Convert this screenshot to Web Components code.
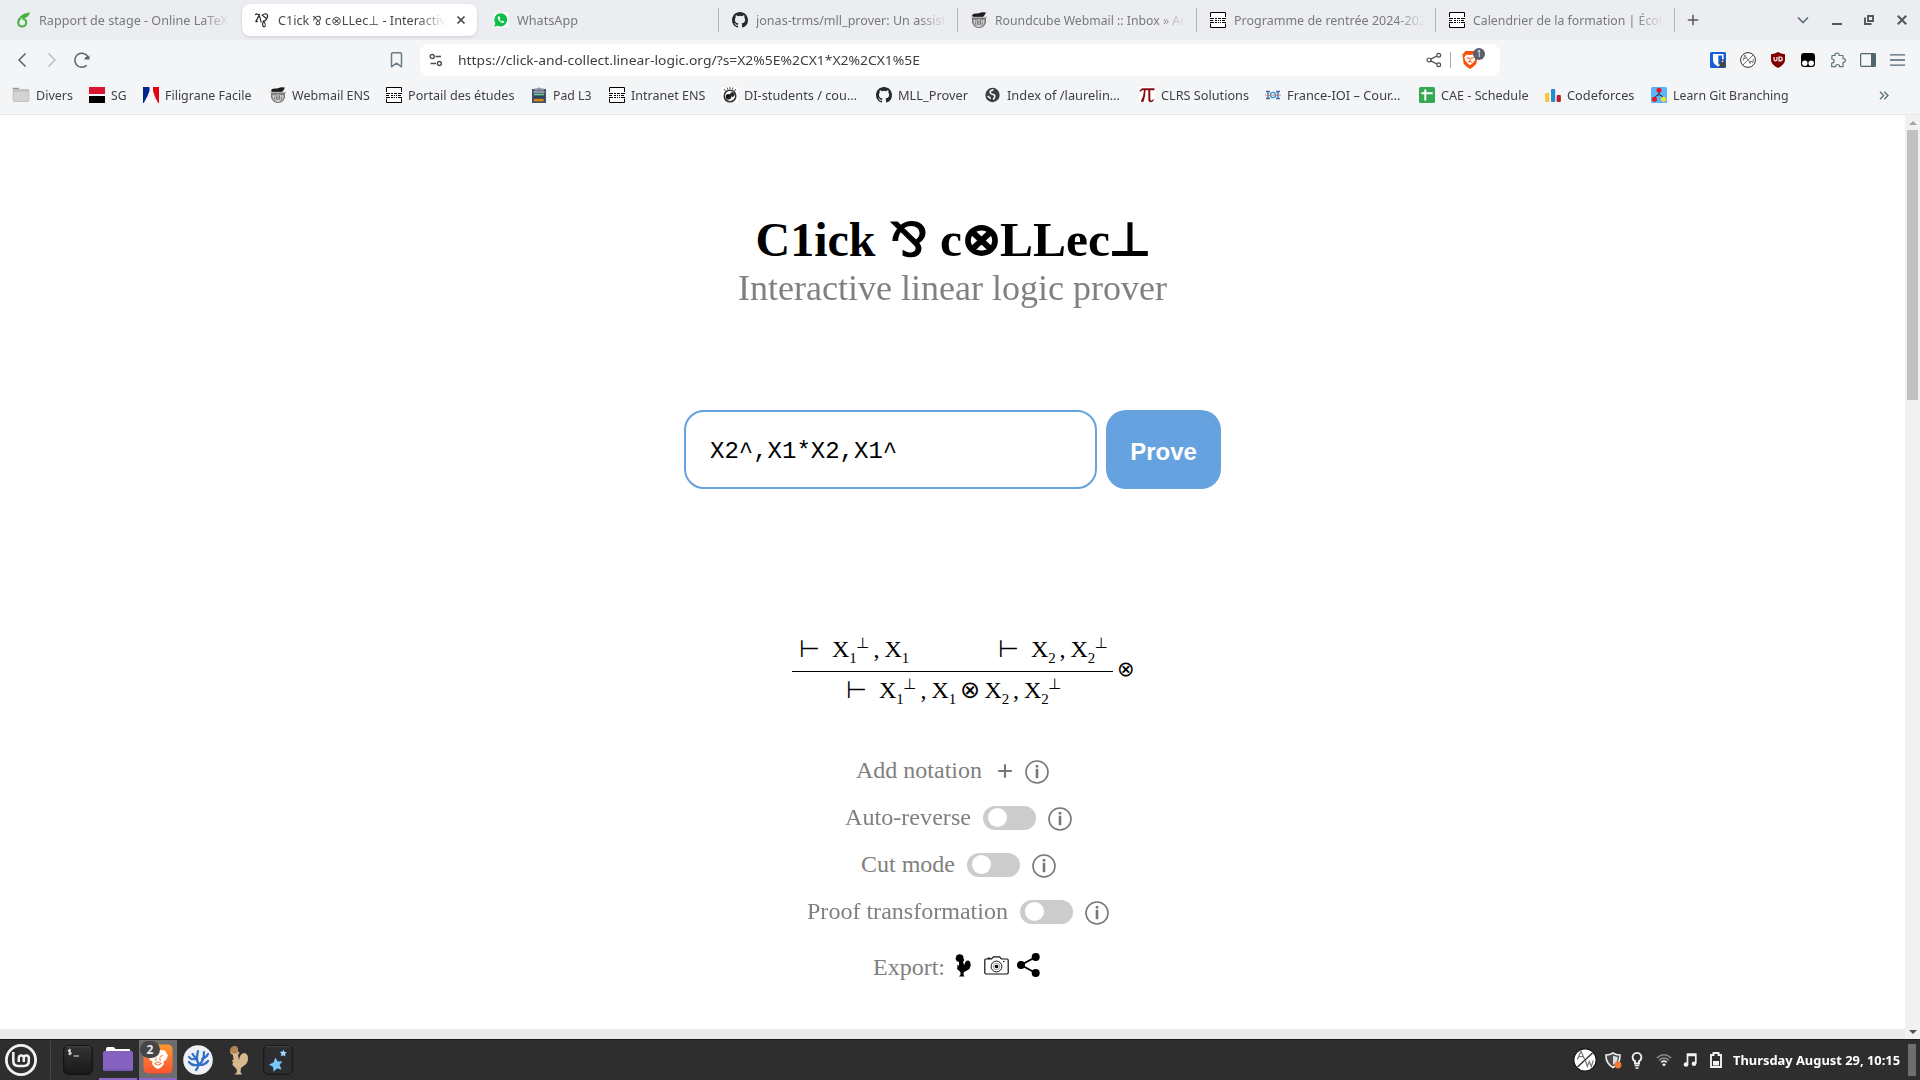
<!DOCTYPE html>
<html lang="en">
<head>
<meta charset="utf-8">
<title>C1ick ⅋ c⊗LLec⊥ - Interactive linear logic prover</title>
<style>
html,body{margin:0;padding:0;width:1920px;height:1080px;overflow:hidden;background:#fff}
</style>
</head>
<body>
<desktop-screen></desktop-screen>
<script>
const ICONS = {
overleaf:['0 0 16 16','<path d="M6.200 5.600C4.200 6.600 3.200 8.600 3.200 10.600a4 4 0 1 0 8 0c0-2.400-1.800-3.800-4-3.800M5.200 6.200C6.500 3.400 9 2.800 13.400 1.800 12.400 4.400 10 5 7.500 5.400" fill="none" stroke="#47b13c" stroke-width="2"/>'],
par:['0 0 16 16','<path d="M1.200 2.800q2-1.800 3.600.2 1.600 2.600 2.400 7.500M5.600 2 Q3.500 7 1.800 9.400 M1.400 9.400q1.400.8 2.400-.4M8.600 4.200q.8-2.600 3-2.400 2.400.4 2 3-.6 2.800-4.400 5.200Q8 12 9 14.200q1.400 1.200 2.200-.2Q11.800 11.400 9 8.600M7.500 2.600L12.500 6.500" fill="none" stroke="#222" stroke-width="1.150"/>'],
whatsapp:['0 0 16 16','<rect x=".5" y=".5" width="15" height="15" fill="#fff" opacity=".7"/><path d="M8 1.200a6.600 6.600 0 0 0-5.700 10L1.300 14.800l3.600-1A6.600 6.600 0 1 0 8 1.200z" fill="#0cbf45"/><path d="M5.500 4.200c-1.400.8-.9 3 .8 4.900 1.800 1.900 4 2.700 5 1.200l-.1-.9-1.500-.8-.9.9c-1-.4-1.800-1.200-2.300-2.300l.8-.9-.7-1.800z" fill="#fff"/>'],
github:['0 0 16 16','<path fill="#24292e" d="M8 0C3.580 0 0 3.580 0 8c0 3.540 2.290 6.530 5.470 7.590.4.070.55-.17.55-.38v-1.490c-2.230.48-2.690-.94-2.690-.94-.36-.92-.89-1.170-.89-1.170-.73-.5.060-.49.060-.49.8.060 1.230.83 1.230.83.71 1.220 1.870.87 2.330.66.070-.52.28-.87.51-1.070-1.780-.2-3.640-.89-3.640-3.950 0-.87.310-1.590.82-2.150-.08-.2-.36-1.020.08-2.120 0 0 .67-.21 2.200.82a7.600 7.600 0 0 1 4 0c1.530-1.040 2.200-.82 2.200-.82.44 1.100.16 1.920.08 2.120.51.56.82 1.270.82 2.150 0 3.070-1.870 3.750-3.650 3.950.29.250.54.730.54 1.480v2.190c0 .21.15.46.55.38A8 8 0 0 0 16 8c0-4.420-3.580-8-8-8z"/>'],
roundcube:['0 0 16 16','<path d="M1 3.500C2 1 5 1.800 7 1.500L11 .3l4 .1-1.500 2.800L12 5H2z" fill="#1d1d1d"/><path d="M1 6h14v4.500Q13 16 8 16T1 10.500z" fill="#777"/><path d="M0 5.300h16M2 8h12M2 9.500h3M11 9.500h3" stroke="#a5a5a5" stroke-width="1"/><path d="M5.300 8v3.200a2.700 2.300 0 0 0 5.400 0V8M3.300 8v4q1.500 2.500 4.700 2.500t4.700-2.500V8M8 7v5" stroke="#e6e6e6" fill="none" stroke-width=".9"/>'],
ens:['0 0 16 16','<path d="M0 0h16v16H0z" fill="#fff"/><path d="M.5 5V.5h15V5M.5 11.500v4h15v-4" fill="none" stroke="#000"/><g shape-rendering="crispEdges" stroke="#000"><path d="M0 6.500h4M5 6.500h2M8 6.500h3M12 6.500h4M0 8.500h3M5 8.500h2M8 8.500h1M10 8.500h1M12 8.500h3M0 10.500h4M5 10.500h2M8 10.500h1M10 10.500h1M12 10.500h4"/></g>'],
close:['0 0 10 10','<path d="M1.500 1.500l7 7M8.500 1.500l-7 7" stroke="currentColor" stroke-width="1.700"/>'],
plus:['0 0 12 12','<path d="M6 .8v10.400M.8 6h10.400" stroke="#55585c" stroke-width="1.500"/>'],
chevdown:['0 0 12 8','<path d="M1 1.500l5 5 5-5" fill="none" stroke="#5d727b" stroke-width="1.700"/>'],
mini:['0 0 10 12','<path d="M0 10h10" stroke="#54565a" stroke-width="2"/>'],
restore:['0 0 10 10','<path d="M4 1h5v5H4zM1 2.500V9h6.500" fill="none" stroke="#54565a" stroke-width="1.900"/>'],
back:['0 0 10 16','<path d="M8.500 1.500L2 8l6.500 6.500" fill="none" stroke="#52666f" stroke-width="1.500"/>'],
fwd:['0 0 10 16','<path d="M1.500 1.500L8 8l-6.500 6.500" fill="none" stroke="#b3bec3" stroke-width="1.400"/>'],
reload:['0 0 16 16','<path d="M12.800 13.200A7 7 0 1 1 14 4.800" fill="none" stroke="#52666f" stroke-width="1.500"/><path d="M10.300 7.600h5.200V3q-1 2.200-2.200 1.300-2.900.8-3 3.300z" fill="#52666f"/>'],
bookmark:['0 0 12 16','<path d="M1 2.200Q1 .8 2.400.8h7.200Q11 .8 11 2.200v12.600l-5-3.600-5 3.600z" fill="none" stroke="#6a7d86" stroke-width="1.500" stroke-linejoin="round"/>'],
tune:['0 0 14 14','<g fill="none" stroke="#4a4d51" stroke-width="1.400"><circle cx="3.200" cy="3.500" r="2"/><path d="M6.500 3.500H12M1.500 10.500H7"/><circle cx="10.400" cy="10.500" r="2"/></g>'],
share:['0 0 16 16','<g fill="none" stroke="#4a4d51" stroke-width="1.200"><circle cx="3" cy="8" r="2"/><circle cx="12.700" cy="3.200" r="1.900"/><circle cx="12.700" cy="12.800" r="1.900"/><path d="M4.800 7.100L11 4M4.800 8.900L11 12"/></g>'],
brave:['0 0 16 18','<path d="M3.500 0h9l3 3.500-1 8.500q-.6 2-6.500 6-5.900-4-6.500-6L.5 3.500z" fill="#fb5009"/><path d="M4.500 3.500l3.500.6 3.500-.6 2.200 2.700-1 3.500L10 12.800 8 14.300l-2-1.500-2.700-3.100-1-3.500z" fill="#fff"/><path d="M4.500 6.700l2.500.6M11.500 6.700l-2.500.6M8 6.500v3.700M6 11.400l2-1 2 1" stroke="#fb5009" stroke-width="1" fill="none"/>'],
bitw:['0 0 16 16','<rect width="16" height="16" rx="1.500" fill="#175ddc"/><path d="M3 2h10.500v6q0 4-5.200 6.500Q3 12 3 8z" fill="#fff"/><path d="M8.300 3.500h3.700V8q0 2.500-3.700 4.700z" fill="#175ddc"/><path d="M9.500 10h6v5.500h-6z" fill="#444"/><path d="M10.800 10.500V8.800q1.700-2 3.400 0v1.700" fill="none" stroke="#444" stroke-width="1.200"/>'],
aw:['0 0 16 16','<circle cx="8" cy="8" r="7.400" fill="#fff" stroke="#333" stroke-width="1"/><path d="M3 12.800L13 3.200M3.200 8.600L4.800 3l3 4.600M4 6.600l2.700-.6M8.500 7.500l1.600 4 .9-2.600 1.800 2 .5-4" fill="none" stroke="#666" stroke-width=".9"/>'],
ublock:['0 0 14 16','<path d="M7 0q3 2 7 2.200V8q0 4.500-7 8-7-3.500-7-8V2.200Q4 2 7 0z" fill="#800000"/><path d="M3 5v2.300q0 1.500 1.500 1.500T6 7.300V5M8 5v3.800h1.300q1.900 0 1.900-1.900T9.300 5z" fill="none" stroke="#fff" stroke-width="1.200"/>'],
tamper:['0 0 16 16','<rect x="1" y="1" width="14" height="14" rx="3" fill="#000"/><circle cx="4.800" cy="11.300" r="2.700" fill="#fff"/><circle cx="11.200" cy="11.300" r="2.700" fill="#fff"/>'],
puzzle:['0 0 16 16','<path d="M2 3.500h3.200Q4.600 1 7 1t2 2.500H13v3.200Q15.500 6.500 15.500 8.500T13 10.700v4H9.500Q9.600 12.500 7.500 12.500T5.500 14.700H1.700V11Q4 11 4 9T1.800 7z" fill="none" stroke="#5d727b" stroke-width="1.200" stroke-linejoin="round"/>'],
side:['0 0 16 14','<rect x=".6" y=".6" width="14.800" height="12.800" rx="1" fill="none" stroke="#52666f" stroke-width="1.200"/><path d="M11 .6h4.500v13H11z" fill="#52666f"/>'],
menu:['0 0 15 12','<path d="M0 .8h15M0 6h15M0 11.200h15" stroke="#52666f" stroke-width="1.300"/>'],
more:['0 0 10 9','<path d="M1 .7l3.700 3.800L1 8.300M5.300.7L9 4.500 5.300 8.300" fill="none" stroke="#5d727b" stroke-width="1.400"/>'],
folder:['0 0 18 16','<path d="M1 2q0-1 1-1h4q1 0 1.500 1H16q1 0 1 1v10q0 1.500-1.500 1.500H2.500Q1 14.500 1 13z" fill="#c4c4c4"/><path d="M1 4h16v9q0 1.500-1.500 1.500H2.500Q1 14.500 1 13z" fill="#d3d3d3" stroke="#aaa" stroke-width=".5"/><path d="M.5 1.300h6.500" stroke="#8a8a8a" stroke-width="1"/>'],
sg:['0 0 16 16','<path d="M0 0h16v7H0z" fill="#dc1532"/><path d="M0 7h16v2H0z" fill="#fff"/><path d="M0 9h16v7H0z" fill="#000"/>'],
fili:['0 0 16 16','<path d="M0 0h16v16H0z" fill="#f8f8fa"/><path d="M0 0h6.500v4L4 10 .8 16H0z" fill="#00268c"/><path d="M10 0H16v16h-.8L12 10 10 4z" fill="#e20613"/>'],
pad:['0 0 14 16','<path d="M0 2h14v14H0z" fill="#42506a"/><path d="M2 3.500h10V1.500H9.500Q7-.5 4.500 1.500H2z" fill="#8d99a6"/><path d="M1.500 5h11" stroke="#e0e3e6"/><path d="M2 7.500h10" stroke="#66d28c" stroke-width="1.500"/><path d="M1.500 10h11" stroke="#23304a"/><path d="M2 13.200h9.500" stroke="#e8890b" stroke-width="2.200"/>'],
di:['0 0 16 16','<path d="M0 0h16v16H0z" fill="#fff"/><circle cx="8" cy="9" r="5.800" fill="none" stroke="#333" stroke-width="1.500"/><circle cx="6.400" cy="9.800" r="2.700" fill="#111"/><circle cx="10.300" cy="7.600" r="2.300" fill="#222"/><path d="M2 2l1.500 2M5 .5l.8 2M8 0v2M11 .5l-.6 2M14 2l-1.500 2M3.500 13.500L13 5.500" stroke="#333" stroke-width=".9"/>'],
globe:['0 0 16 16','<circle cx="7.500" cy="8" r="7.200" fill="#3c4043"/><path d="M8.500 2.800Q5.500 3.200 5 5.200q.2 1.600 2.300 2.100 2.500.2 2.500 2-.2 1.800-1.800 3M2.500 9.200L4.800 10.500l.6 1.600" fill="none" stroke="#f4f5f7" stroke-width="1.500"/>'],
pi:['0 0 16 16','<path d="M0 0h16v16H0z" fill="#fff"/><path d="M.3 4.800Q1.500 1.300 4 1.300h11.500v2H11.300V12q.2 2 1.500 1.600 1-.3 1.200-1.600h.8q-.3 3.200-3 3.300-2.500 0-2.500-3.200V3.300H6.500Q6.500 10 4.600 14.500q-1.500 1.200-2.700-.3Q4.800 9 5 3.300H4Q2 3.300 1.200 4.800z" fill="#850d12"/>'],
ioi:['0 0 16 16','<path d="M1 4.500h4M3 4.500v7M1 11.500h4M11 4.500h4M13 4.500v7M11 11.500h4" stroke="#3a6cab" stroke-width="1.300"/><circle cx="8" cy="8" r="2.600" fill="none" stroke="#3a90c5" stroke-width="1.400"/><path d="M0 8.200h16" stroke="#b56a66" stroke-width=".7"/>'],
cae:['0 0 16 16','<rect width="16" height="16" rx="1.500" fill="#34a853"/><path d="M6.300 2.500v11M2.300 6.300h11.400" stroke="#fff" stroke-width="2"/>'],
cf:['0 0 16 16','<rect x="0" y="6" width="4.300" height="9" rx="1" fill="#f5c83c"/><rect x="6" y="2" width="4.200" height="13" rx="1" fill="#1f8dcf"/><rect x="11.600" y="8" width="4.300" height="7" rx="1" fill="#b8202b"/>'],
git:['0 0 16 16','<rect width="16" height="16" rx="1.500" fill="#58b7fa"/><path d="M8 4v3.500M3.500 12Q4 8.500 8 7.500q4 1 4.500 4.500" stroke="#222" fill="none"/><circle cx="8" cy="3.300" r="2.500" fill="#f3111a"/><circle cx="3.500" cy="12.300" r="2.500" fill="#f3111a"/><circle cx="12.500" cy="12.300" r="2.500" fill="#f5e620"/>'],
info:['0 0 24 24','<circle cx="12" cy="12" r="11" fill="none" stroke="#777" stroke-width="1.600"/><path d="M12 8.800V18.200" stroke="#777" stroke-width="2.600"/><path d="M12 5v2.500" stroke="#777" stroke-width="2.600"/>'],
add:['0 0 14 14','<path d="M7 .3v13.400M.2 7h13.600" stroke="#777" stroke-width="2.100"/>'],
rooster:['0 0 16 23','<path d="M1.500 1.500Q4-.8 7 .8q1.800 1.200 1.400 3.600L9.300 6 8 8l1.200 3.200q.8-4.700 4-4.700Q16 7.500 15.600 12q-.6 3.500-3.600 4.500L9 18l-.6 2.500 1 2H4l1.600-2-.2-2.500-3.300-3q-.4-1.500.6-2L2 11l2 .6V8Q1 7.500.6 4.500z" fill="#000"/>'],
camera:['0 0 25 19','<path d="M2 3h5.500l2-2.200h6L17.500 3H23q1.200 0 1.200 1.200v12.600q0 1.200-1.200 1.200H2q-1.200 0-1.200-1.200V4.200Q.8 3 2 3z" fill="none" stroke="#111" stroke-width="1.200"/><circle cx="12.500" cy="10.500" r="5.400" fill="none" stroke="#111"/><circle cx="12.500" cy="10.500" r="3.200" fill="none" stroke="#111" stroke-width=".4"/><circle cx="12.500" cy="10.500" r="1.800"/><path d="M3.500 2.300h3" stroke="#111" stroke-width="1.400"/><circle cx="19.800" cy="5.500" r=".8"/>'],
nodes:['0 0 23 24','<circle cx="4" cy="12" r="4"/><circle cx="18.700" cy="4" r="4"/><circle cx="18.700" cy="20" r="4"/><path d="M18.700 4L4 12l14.700 8" fill="none" stroke="#000" stroke-width="1.900"/>'],
mint:['0 0 32 32','<circle cx="16" cy="16" r="14.600" fill="none" stroke="#f2f2f2" stroke-width="2.800"/><path d="M8.300 8v9q0 5 5 5h5.500q5 0 5-5v-3q0-2.500-2.500-2.500t-2.500 2.500v4M18.800 14q0-2.500-2.500-2.500T13.800 14v4" fill="none" stroke="#f2f2f2" stroke-width="2.500"/>'],
term:['0 0 30 30','<defs><linearGradient id="g" x2="0" y2="1"><stop stop-color="#333"/><stop offset="1" stop-color="#191919"/></linearGradient></defs><rect x=".7" y=".7" width="28.600" height="28.600" rx="4.500" fill="url(#g)" stroke="#0e0e0e"/><path d="M2.500 1.700h25" stroke="#555" stroke-width=".7"/><path d="M8 5.200q-2.600-.7-2.600.7 0 .9 1.400 1.100 1.500.3 1.400 1.300-.3 1.200-2.900.5M6.800 3.800v6.400M10.500 11h5.500" stroke="#e6e6e6" stroke-width="1.100" fill="none"/>'],
files:['0 0 30 26','<path d="M3 3q0-2 2-2h5q1.500 0 2.500 2H27v6H3z" fill="#fff"/><rect y="5" width="30" height="20" rx="1.500" fill="#8562c0"/><path d="M.5 24h29" stroke="#6f4ea8"/>'],
lion:['0 0 30 30','<defs><linearGradient id="b" x2="0" y2="1"><stop stop-color="#fb9a33"/><stop offset="1" stop-color="#fb5330"/></linearGradient></defs><rect x=".5" y=".5" width="29" height="29" rx="5" fill="url(#b)"/><path d="M7 8l5-2 3 .8L18 6l4 .5 3 5-2 4.500-2.500 1.500.5 2.500-3 3.500-3 1.500-3-1.500L9 20l.5-2.500L7 16l-2-4.500z" fill="#fff"/><path d="M10 11.500l3 1M20 11.500l-3 1M13.300 13.500l-.6 3.500M16.700 13.500l.6 3.500M11.500 19.500L15 18l3.500 1.500-3.500 1.700z" stroke="#fb7030" stroke-width="1" fill="none"/>'],
coral:['0 0 30 30','<circle cx="15" cy="15" r="14.800" fill="#eef0f4"/><path d="M13 25q3-3 2-7.500Q13 13 9.500 9M15 18q-2-5 0-12M16 19q5-2 5-12M17 20q5 0 8-4M14 20q-5 1-8-3M12 14q-4 1-6-2M19 14q4-1 6-5" stroke="#2f6fc4" stroke-width="2.200" fill="none" stroke-linecap="round"/>'],
coq:['0 0 20 30','<path d="M2 3Q4 .5 7.500 1.500 9.500 3 9 6l1.500 2L9 10l1 5q1-7 5.500-7Q19.500 9 19 15q-1 4.500-4.500 6L12 23l-.5 4 1.500 2.500H5.500L8 27l-.5-3-4-4q-.5-2 .7-2.500L2.500 15l2 .3L4 10Q.5 8.500 1 6z" fill="#d7b98d"/><path d="M2 3Q4 .5 7.500 1.500 9.500 3 9 6L8 8.500H3.500Q.5 8 1 6z" fill="#b88354"/>'],
anki:['0 0 30 30','<rect x=".7" y=".7" width="28.600" height="28.600" rx="4.500" fill="#2b2d31" stroke="#141414"/><path d="M2.500 1.700h25" stroke="#555" stroke-width=".7"/><path d="M12.500 12.500l2.200 4 4.600-.2-2.700 3.800 2 4.400-4.600-1-3.500 3.300-.4-4.800-4.100-2.500 4.500-1.900z" fill="#78c8fb"/><path d="M20.500 4.500l.8 2.500 2.700.2-2 1.800.6 2.600-2.400-1.400-2.400 1.100.7-2.600-1.900-2 2.700 0z" fill="#a2dbff"/>'],
awtray:['0 0 24 24','<circle cx="12" cy="12" r="11.200" fill="#fff" stroke="#111" stroke-width="1.200"/><path d="M4.500 19L19.500 5" stroke="#222" stroke-width="1.200"/><path d="M4.300 11.500L8 3.200l3.600 8M5.400 8.700h5M12.500 12.500l1.800 6 2-5 2 5 2-6" fill="none" stroke="#777" stroke-width="1.200"/>'],
shield:['0 0 18 17','<path d="M8 1Q11 3 15 3q.5 8-7 12.500Q.5 11 1 3q4 0 7-2z" fill="#4a4a4a" stroke="#eee" stroke-width="1.600"/><path d="M8 3.500q2.500 1.300 4.800 1.400Q13 10 8 13z" fill="#ddd"/><circle cx="13" cy="13" r="3.400" fill="#f27835"/>'],
bulb:['0 0 12 18','<path d="M4 12.500V10.200A4.400 4.400 0 1 1 8 10.200v2.300z" fill="none" stroke="#f2f2f2" stroke-width="1.900"/><path d="M3.700 14.500h4.600M4.500 17h3" stroke="#f2f2f2" stroke-width="1.300"/>'],
wifi:['0 0 16 14','<path d="M.8 5Q8-1.500 15.200 5M3 7.300q5-4.300 10 0" fill="none" stroke="#888" stroke-width="1.600"/><path d="M5.200 9.300q2.800-2.300 5.600 0" fill="none" stroke="#eee" stroke-width="1.500"/><path d="M6 11.300q2-1.400 4 0L8 13.500z" fill="#fff"/>'],
note:['0 0 14 14','<path d="M4.500 11.500V1.200h8.300v9.300M4.500 2.300h8" stroke="#f2f2f2" stroke-width="1.700" fill="none"/><circle cx="3" cy="11.500" r="2.300" fill="#f2f2f2"/><circle cx="11" cy="10.700" r="2.300" fill="#f2f2f2"/>'],
batt:['0 0 12 16','<path d="M1 3h2.500V1h5v2H11v12H1z" fill="none" stroke="#f2f2f2" stroke-width="1.900"/><path d="M3 9h6v4.500H3z" fill="#f2f2f2"/>'],
up:['0 0 8 4','<path d="M0 4h8L4 0z" fill="#a3a3a3"/>'],
down:['0 0 8 4','<path d="M0 0h8L4 4z" fill="#505050"/>']
};
const def = (name, render, after) => customElements.define(name, class extends HTMLElement {
  connectedCallback(){
    if(this.shadowRoot) return;
    this.attachShadow({mode:'open'}).innerHTML = render(this);
    if(after) after(this);
  }
});
const a = (e,k,d='') => e.hasAttribute(k) ? e.getAttribute(k) : d;

/* Icon: n = name, w/h = size, l = left margin */
def('svg-icon', e => { const [vb,body]=ICONS[a(e,'n')]; const w=a(e,'w','16'),h=a(e,'h',w);
  return `<style>:host{display:block;flex:none;width:${w}px;height:${h}px;margin-left:${a(e,'l','0')}px}svg{display:block}</style><svg width="${w}" height="${h}" viewBox="${vb}">${body}</svg>`; });

/* Text run condensed or widened to a fixed advance */
def('fit-text', e => `<style>:host{display:block;flex:none;white-space:nowrap;width:${a(e,'w')}px;margin-left:${a(e,'l','0')}px}
span{display:inline-block;transform-origin:0 50%}</style><span><slot></slot></span>`,
  e => { const s=e.shadowRoot.querySelector('span'); const r=s.getBoundingClientRect().width; if(r) s.style.transform=`scaleX(${a(e,'w')/r})`; });

def('browser-tab', e => `<style>
:host{display:flex;align-items:center;box-sizing:border-box;width:239px;height:40px;flex:none;color:#77797e}
.t{flex:1;display:flex;align-items:center;height:32px;margin:0 2px 0 1px;padding-left:12px;border-radius:8px;min-width:0}
:host([active]) .t{background:#fff;color:#45474b;box-shadow:0 1px 3px #0002}
.c{width:${a(e,'cw','191')}px;overflow:hidden;flex:none;margin-left:8px;${e.hasAttribute('fade')?'-webkit-mask-image:linear-gradient(90deg,#000 calc(100% - 28px),transparent)':''}}
.s{width:1px;height:24px;background:${e.hasAttribute('sep')?'#b5b6b9':'transparent'}}
</style><div class="t"><svg-icon n="${a(e,'icon')}"></svg-icon><div class="c"><fit-text w="${a(e,'tw')}"><slot></slot></fit-text></div>${e.hasAttribute('active')?'<svg-icon n="close" w="10" l="10"></svg-icon>':''}</div><div class="s"></div>`);

def('tab-strip', () => `<style>:host{display:flex;align-items:center;height:40px;background:#ecedf1;padding-left:2px}</style>
<browser-tab icon="overleaf" tw="189" fade>Rapport de stage - Online LaTeX</browser-tab>
<browser-tab icon="par" tw="168" cw="168" fade active>C1ick ⅋ c⊗LLec⊥ - Interactiv</browser-tab>
<browser-tab icon="whatsapp" tw="61" sep>WhatsApp</browser-tab>
<browser-tab icon="github" tw="190" fade sep>jonas-trms/mll_prover: Un assist</browser-tab>
<browser-tab icon="roundcube" tw="191" fade sep>Roundcube Webmail :: Inbox » Ac</browser-tab>
<browser-tab icon="ens" tw="192" fade sep>Programme de rentrée 2024-202</browser-tab>
<browser-tab icon="ens" tw="189" fade sep>Calendrier de la formation | Écol</browser-tab>
<svg-icon n="plus" w="12" l="12"></svg-icon>
<svg-icon n="chevdown" w="12" h="8" l="98"></svg-icon>
<svg-icon n="mini" w="10" h="12" l="23"></svg-icon>
<svg-icon n="restore" w="10" l="22"></svg-icon>
<svg-icon n="close" w="12" l="22" style="color:#54565a"></svg-icon>`);

def('nav-toolbar', () => `<style>:host{display:flex;align-items:center;height:40px;padding-left:17px}
.url{display:flex;align-items:center;width:1080px;height:32px;margin-left:17px;border-radius:9px;background:#fff;color:#3b3d42;flex:none}
.sep{width:1px;height:16px;background:#aaa;margin-left:8px}
.br{position:relative;margin-left:11px}
.n{position:absolute;left:11px;top:-3px;width:12px;height:12px;border-radius:6px;background:#5a5e6f;color:#fff;font-size:8px;line-height:12px;text-align:center}
.sp{flex:1}</style>
<svg-icon n="back" w="10" h="16"></svg-icon><svg-icon n="fwd" w="10" h="16" l="20"></svg-icon><svg-icon n="reload" l="17"></svg-icon>
<svg-icon n="bookmark" w="13" h="16" l="300"></svg-icon>
<div class="url"><svg-icon n="tune" w="14" l="9"></svg-icon><fit-text w="462" l="15">https://click-and-collect.linear-logic.org/?s=X2%5E%2CX1*X2%2CX1%5E</fit-text><div class="sp"></div>
<svg-icon n="share"></svg-icon><div class="sep"></div><div class="br"><svg-icon n="brave" w="16" h="18"></svg-icon><div class="n">1</div></div><div style="width:22px"></div></div>
<svg-icon n="bitw" l="210"></svg-icon><svg-icon n="aw" l="14"></svg-icon><svg-icon n="ublock" w="14" h="16" l="15"></svg-icon><svg-icon n="tamper" l="15"></svg-icon><svg-icon n="puzzle" l="14"></svg-icon><svg-icon n="side" w="16" h="14" l="14"></svg-icon><svg-icon n="menu" w="15" h="12" l="14"></svg-icon>`);

def('bookmark-item', e => `<style>:host{display:flex;align-items:center;flex:none;width:${a(e,'w')}px}</style>
<svg-icon n="${a(e,'icon')}" w="${a(e,'iw','16')}" h="16"></svg-icon><fit-text l="${a(e,'g','6')}" w="${a(e,'tw')}"><slot></slot></fit-text>`);

def('bookmark-bar', () => `<style>:host{display:flex;align-items:center;padding:0 0 2px 12px;color:#3d3f43;border-bottom:1px solid #e6e7ea;box-sizing:border-box;margin-top:-2px;height:37px}</style>
<bookmark-item icon="folder" iw="18" w="77" tw="37">Divers</bookmark-item>
<bookmark-item icon="sg" w="54" tw="15.500">SG</bookmark-item>
<bookmark-item icon="fili" w="127" tw="86.500">Filigrane Facile</bookmark-item>
<bookmark-item icon="roundcube" w="116" tw="78">Webmail ENS</bookmark-item>
<bookmark-item icon="ens" w="146" tw="106.500">Portail des études</bookmark-item>
<bookmark-item icon="pad" iw="14" w="77" g="7" tw="38.500">Pad L3</bookmark-item>
<bookmark-item icon="ens" w="113" tw="74.500">Intranet ENS</bookmark-item>
<bookmark-item icon="di" w="154" tw="113">DI-students / cou…</bookmark-item>
<bookmark-item icon="github" w="109" tw="70">MLL_Prover</bookmark-item>
<bookmark-item icon="globe" w="154" tw="113">Index of /laurelin…</bookmark-item>
<bookmark-item icon="pi" w="126" tw="88">CLRS Solutions</bookmark-item>
<bookmark-item icon="ioi" w="154" tw="113.500">France-IOI – Cour…</bookmark-item>
<bookmark-item icon="cae" w="126" tw="87.500">CAE - Schedule</bookmark-item>
<bookmark-item icon="cf" w="106" tw="67.500">Codeforces</bookmark-item>
<bookmark-item icon="git" w="228" tw="115.500">Learn Git Branching</bookmark-item>
<svg-icon n="more" w="10" h="9"></svg-icon>`);

/* Sequent: tokens in a string, T turnstile, 1/2 atoms, ' dual, , comma, * tensor */
def('sequent-line', e => { const M={T:'<i style="width:33px" class="s">⊢</i>','1':'<i style="width:25.500px">X<sub>1</sub></i>','2':'<i style="width:25.500px">X<sub>2</sub></i>',"'":'<i style="width:13px"><sup>⊥</sup></i>',',':'<i style="width:14px"><b></b>,</i>','*':'<i style="width:27.500px" class="s t">⊗</i>'};
  return `<style>:host{display:flex;height:34px;line-height:34px;margin-left:${a(e,'l','0')}px;flex:none}
i{font-style:normal;flex:none;white-space:nowrap;height:34px;display:block}b{display:inline-block;width:3px}
.s{font-family:"DejaVu Sans","Liberation Serif",serif;font-size:24px}.t{text-indent:3px}
sub,sup{font-size:15px;line-height:0;position:relative;vertical-align:baseline}sub{top:6px}sup{top:-9px;left:-1.500px;font:15px "DejaVu Sans",sans-serif;line-height:0}</style>`+[...a(e,'f')].map(c=>M[c]).join(''); });

def('proof-tree', () => `<style>:host{display:flex;flex:none;align-items:center;width:342px;margin-left:792px;color:#000}
.p{width:321px;flex:none}.r{display:flex;width:321px}.up{height:39px;border-bottom:1px solid #000}.lo{padding-top:1px}
.rule{font:21px/20px "DejaVu Sans",sans-serif;margin:-1px 0 0 4px}</style>
<div class="p"><div class="r up"><sequent-line f="T1',1" l="7"></sequent-line><div style="flex:1"></div><sequent-line f="T2,2'" style="margin-right:4px"></sequent-line></div>
<div class="r lo"><sequent-line f="T1',1*2,2'" l="54"></sequent-line></div></div><div class="rule">⊗</div>`);

def('toggle-switch', () => `<style>:host{display:flex;align-items:center;width:53px;height:24px;border-radius:12px;background:#ccc;flex:none;box-sizing:border-box;padding-left:5px}div{width:19px;height:19px;border-radius:50%;background:#fff}</style><div></div>`);

def('option-row', e => `<style>:host{display:flex;align-items:center;height:47px;padding-left:${a(e,'x')}px;color:#808080}
toggle-switch{margin-left:12px}.i{padding-top:2px}</style><fit-text w="${a(e,'tw')}"><slot></slot></fit-text>${e.hasAttribute('plus')?'<svg-icon n="add" w="14" l="16"></svg-icon>':'<toggle-switch></toggle-switch>'}<div class="i"><svg-icon n="info" w="24" l="${e.hasAttribute('plus')?13:12}"></svg-icon></div>`);

def('prover-page', () => `<style>
:host{display:block;height:914px;width:1905px;background:#fff;font:24px "Liberation Serif",serif;overflow:hidden}
h1{display:flex;justify-content:flex-start;margin:0;padding:97px 0 0 755.500px;font:bold 48px/56px "Liberation Serif","DejaVu Sans",serif;color:#000}
.op{font-family:"DejaVu Sans",sans-serif;font-weight:400;font-size:46px;-webkit-text-stroke:1.300px #000}
.ox{font-size:43px;-webkit-text-stroke:2.200px #000;margin-top:-1px}
h2{display:flex;margin:0;padding-left:738px;font:36px/40px "Liberation Serif",serif;color:#808080}
form{display:flex;margin:102px 0 0 684px;gap:9px}
.in{box-sizing:border-box;width:413px;height:79px;border:2px solid #67a2e0;border-radius:20px;padding-left:24px;font:24px/79px "Liberation Mono",monospace;color:#000}
.bt{width:115px;height:79px;border-radius:20px;background:#67a2e0;color:#fff;font:bold 24px/84px "Liberation Sans",sans-serif;text-align:center}
proof-tree{margin-top:143px}
.opts{padding-top:40px}
.ex{display:flex;align-items:center;padding-left:873px;height:30px;margin-top:17px;color:#808080}
.ex svg-icon{margin-bottom:4px}
</style>
<h1><fit-text w="120">C1ick</fit-text><fit-text class="op" w="38" l="14">⅋</fit-text><fit-text w="22" l="12">c</fit-text><fit-text class="op ox" w="39" l="0">⊗</fit-text><fit-text w="110" l="-1">LLec</fit-text><fit-text w="44" l="-2">⊥</fit-text></h1>
<h2><fit-text w="429">Interactive linear logic prover</fit-text></h2>
<form><div class="in">X2^,X1*X2,X1^</div><div class="bt">Prove</div></form>
<proof-tree></proof-tree>
<div class="opts">
<option-row x="856" tw="126" plus>Add notation</option-row>
<option-row x="845" tw="126">Auto-reverse</option-row>
<option-row x="861" tw="94">Cut mode</option-row>
<option-row x="807" tw="201">Proof transformation</option-row></div>
<div class="ex"><fit-text w="72">Export:</fit-text><svg-icon n="rooster" w="16" h="23" l="10"></svg-icon><svg-icon n="camera" w="25" h="19" l="13"></svg-icon><svg-icon n="nodes" w="23" h="24" l="8"></svg-icon></div>`);

def('scroll-rail', () => `<style>:host{display:flex;flex-direction:column;align-items:center;width:15px;height:924px;background:#f1f1f1}
.t{width:11px;height:270px;background:#c1c1c1;margin-top:5px}</style><div style="height:6px"></div><svg-icon n="up" w="8" h="4"></svg-icon><div class="t"></div><div style="flex:1"></div><svg-icon n="down" w="8" h="4"></svg-icon><div style="height:5px"></div>`);

def('task-bar', () => `<style>:host{display:flex;align-items:center;height:41px;box-sizing:border-box;border-top:1px solid #1c1c1c;background:#2e2e2e;padding-left:5px;color:#fff;font-weight:bold}
.sep{width:1px;height:38px;background:#484848;margin-left:13px}
.w{display:flex;width:38px;height:40px;box-sizing:border-box;border-bottom:2px solid #8a66c8;align-items:center;justify-content:center;position:relative;margin-left:6px}
.w.on{background:#6e6e6e;margin-left:2px}
.n{position:absolute;left:1px;top:1px;width:20px;height:17px;border-radius:9px;background:#464646;color:#e8eef4;font-size:12px;line-height:18px;text-align:center}
.end{width:8px;height:32px;background:#6e6e6e;margin-left:8px}</style>
<svg-icon n="mint" w="32"></svg-icon><div class="sep"></div><svg-icon n="term" w="30" l="12"></svg-icon>
<div class="w"><svg-icon n="files" w="30" h="26"></svg-icon></div><div class="w on"><svg-icon n="lion" w="30"></svg-icon><div class="n">2</div></div>
<svg-icon n="coral" w="30" l="6"></svg-icon><svg-icon n="coq" w="20" h="30" l="16"></svg-icon><svg-icon n="anki" w="30" l="14"></svg-icon>
<div style="flex:1"></div>
<svg-icon n="awtray" w="24"></svg-icon><svg-icon n="shield" w="18" h="17" l="8"></svg-icon><svg-icon n="bulb" w="12" h="18" l="8"></svg-icon><svg-icon n="wifi" w="16" h="14" l="13"></svg-icon><svg-icon n="note" w="14" l="11"></svg-icon><svg-icon n="batt" w="12" h="16" l="13"></svg-icon><fit-text w="167" l="11">Thursday August 29, 10:15</fit-text><div class="end"></div><div style="width:4px"></div>`);

def('desktop-screen', () => `<style>
:host{display:block;width:1920px;height:1080px;font:13px/20px "Noto Sans","DejaVu Sans",sans-serif;background:#ebebeb}
.chrome{background:#f4f5f7;height:115px}.view{display:flex;height:924px}</style>
<div class="chrome"><tab-strip></tab-strip><nav-toolbar></nav-toolbar><bookmark-bar></bookmark-bar></div>
<div class="view"><prover-page></prover-page><scroll-rail></scroll-rail></div>
<task-bar></task-bar>`);
</script>
</body>
</html>
